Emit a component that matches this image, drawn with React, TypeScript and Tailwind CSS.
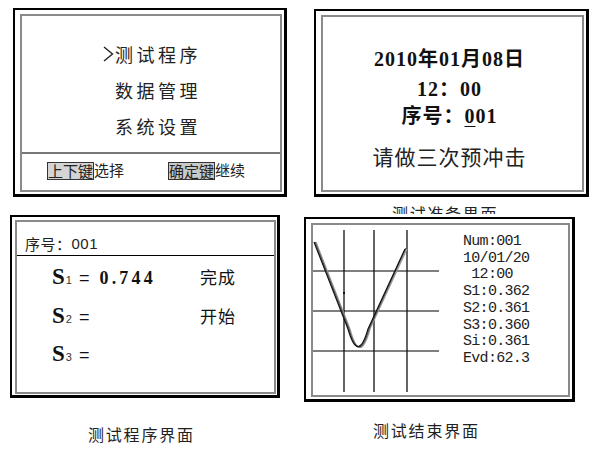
import type { ReactNode } from "react";

interface FrameProps {
  className: string;
  pad?: string;
  children?: ReactNode;
}

// LCD style double frame: heavy black outside, grey line inside
const Frame = ({
  className,
  pad = "pt-[4px] pl-[5px] pr-[2px] pb-[2px]",
  children,
}: FrameProps) => (
  <div
    className={`shrink-0 bg-white border-black border-t-2 border-l-2 border-r-[3px] border-b-[3px] ${pad} ${className}`}
  >
    <div className="h-full border-2 border-[#8a8a8a] flex flex-col">{children}</div>
  </div>
);

const READINGS = ["Num:001", "10/01/20", " 12:00", "S1:0.362", "S2:0.361", "S3:0.360", "Si:0.361", "Evd:62.3"];

const SRow = ({ n, value, status }: { n: string; value?: string; status?: string }) => (
  <div className="flex items-baseline h-[38.5px]">
    <div className="w-[148px] flex items-baseline">
      <span className="font-['Liberation_Serif',serif] font-bold text-[23px] leading-none">S</span>
      <span className="font-['Liberation_Sans',sans-serif] text-[11px] leading-none ml-[1px] text-[#333]">{n}</span>
      <span className="font-['Liberation_Sans',sans-serif] text-[18px] leading-none ml-[7px]">=</span>
      {value && (
        <span className="font-['Liberation_Serif',serif] font-bold text-[18px] leading-none ml-[10px] tracking-[3.2px]">
          {value}
        </span>
      )}
    </div>
    {status && <span className="text-[17px] leading-none tracking-[1px]">{status}</span>}
  </div>
);

const Chart = () => (
  <svg width="128" height="171" viewBox="0 0 128 171" className="shrink-0">
    {/* grid */}
    {[46, 86, 126].map((y) => (
      <line key={y} x1="0" y1={y} x2="126" y2={y} stroke="#555" strokeWidth="1.6" />
    ))}
    {[31, 61, 94].map((x) => (
      <line key={x} x1={x} y1="5" x2={x} y2="167" stroke="#111" strokeWidth="1.3" />
    ))}
    {/* overlaid test curves */}
    <path d="M3 17 L37 104 Q47 141 57 104 L94 24" fill="none" stroke="#999" strokeWidth="1.2" />
    <path d="M2 17 L36 104 Q46 140 56 104 L93 23" fill="none" stroke="#555" strokeWidth="1.2" />
    <path d="M1 17 L35 104 Q45 139 55 104 L92 24" fill="none" stroke="#111" strokeWidth="1.2" />
    <rect x="30" y="67" width="2" height="2" fill="#111" />
  </svg>
);

export default function App() {
  return (
    <div className="w-[593px] h-[469px] bg-white overflow-hidden flex text-[#111] font-['Noto_Sans_CJK_SC',sans-serif]">
      {/* left column */}
      <div className="ml-[10px] w-[277px] flex flex-col">
        <Frame className="ml-[3px] mt-[8px] w-[274px] h-[189px]">
          <div className="flex-1 flex flex-col items-start pl-[93px] pt-[20px] text-[18px] leading-[36px] tracking-[3.5px] text-[#222]">
            <div className="-ml-[12px] flex items-center">
              <svg width="12" height="16" viewBox="0 0 12 16" className="shrink-0">
                <path d="M1 1 L9.5 8 L1 15" fill="none" stroke="#222" strokeWidth="1.4" />
              </svg>
              测试程序
            </div>
            <div>数据管理</div>
            <div>系统设置</div>
          </div>
          <div className="h-[38px] border-t-2 border-[#777] flex items-start pt-[8px] pl-[25px] text-[15px] leading-[16px] text-[#222]">
            <span className="border border-[#333] bg-[#d4d4d4]">上下键</span>
            <span>选择</span>
            <span className="ml-[44px] border border-[#333] bg-[#c9c9c9]">确定键</span>
            <span>继续</span>
          </div>
        </Frame>

        <Frame className="mt-[18px] w-[270px] h-[183px]" pad="pt-[3px] pl-[3px] pr-[1px] pb-[1px]">
          <div className="h-[34px] border-b border-black flex items-end pb-[2px] pl-[8px] text-[15px] leading-[18px] tracking-[0.5px] text-[#222]">
            序号：<span className="font-['Liberation_Sans',sans-serif]">001</span>
          </div>
          <div className="flex flex-col pl-[35px] pt-[9px]">
            <SRow n="1" value="0.744" status="完成" />
            <SRow n="2" status="开始" />
            <SRow n="3" />
          </div>
        </Frame>

        <div className="mt-[26px] ml-[78px] text-[16px] leading-[20px] tracking-[1.8px] text-[#222]">测试程序界面</div>
      </div>

      {/* right column */}
      <div className="ml-[17px] w-[286px] flex flex-col">
        <Frame className="ml-[10px] mt-[9px] w-[275px] h-[188px]">
          <div className="flex-1 flex flex-col items-center pt-[30px] pr-[6px]">
            <div className="font-['Liberation_Serif','Noto_Sans_CJK_SC',serif] font-bold text-[20px] leading-[24px] tracking-[1px]">
              2010年01月08日
            </div>
            <div className="mt-[6px] font-['Liberation_Serif','Noto_Sans_CJK_SC',serif] font-bold text-[20px] leading-[24px] tracking-[1px]">
              12：00
            </div>
            <div className="mt-[3px] font-['Liberation_Serif','Noto_Sans_CJK_SC',serif] font-bold text-[20px] leading-[24px] tracking-[1px]">
              序号：<span className="underline underline-offset-[3px] decoration-1">0</span>01
            </div>
            <div className="mt-[15px] text-[21px] leading-[26px] tracking-[1px] text-[#222]">请做三次预冲击</div>
          </div>
        </Frame>

        <div className="mt-[8px] h-[9px] overflow-hidden ml-[88px] text-[16px] leading-[16px] tracking-[1.7px] text-[#222]">
          测试准备界面
        </div>

        <Frame className="mt-[3px] w-[271px] h-[185px]">
          <div className="flex-1 flex">
            <Chart />
            <div className="ml-[22px] pt-[9px] font-['Liberation_Mono',monospace] text-[15px] leading-[16.7px] tracking-[-0.7px] whitespace-pre text-[#222]">
              {READINGS.map((r) => (
                <div key={r}>{r}</div>
              ))}
            </div>
          </div>
        </Frame>

        <div className="mt-[18px] ml-[69px] text-[16px] leading-[20px] tracking-[1.8px] text-[#222]">测试结束界面</div>
      </div>
    </div>
  );
}
